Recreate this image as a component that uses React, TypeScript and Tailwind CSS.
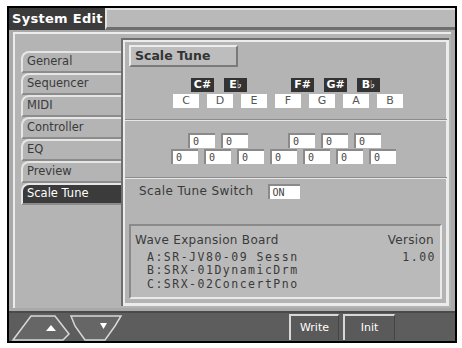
import React from "react";

const tabs = ["General", "Sequencer", "MIDI", "Controller", "EQ", "Preview", "Scale Tune"];
const blackKeys = [
  { name: "C#", ml: "ml-[18px]" },
  { name: "E♭", ml: "ml-[10px]" },
  { name: "F#", ml: "ml-[44px]" },
  { name: "G#", ml: "ml-[10px]" },
  { name: "B♭", ml: "ml-[10px]" },
];
const whiteKeys = ["C", "D", "E", "F", "G", "A", "B"];

function Field({ value, w = "w-[27px]" }: { value: string; w?: string }) {
  return (
    <div
      className={`${w} h-[15px] bg-white border-l-2 border-t-2 border-[#8a8a8a] text-[10px] leading-[13px] pl-[3px] text-[#444] font-['DejaVu_Sans_Mono',monospace]`}
    >
      {value}
    </div>
  );
}

function App() {
  return (
    <div className="w-[462px] h-[348px] bg-white pt-[6px] pl-[7px] font-['DejaVu_Sans',sans-serif]">
      <div className="w-[450px] h-[337px] border-2 border-black flex flex-col bg-[#b4b4b4]">
        {/* title */}
        <div className="flex h-[22px] shrink-0">
          <div className="w-[96px] bg-[#3b3b3b] text-white font-bold text-[13px] leading-[22px] pl-[3px] tracking-[0.3px]">
            System Edit
          </div>
          <div className="flex-1 bg-[#b9b9b9] border-t-2 border-l-2 border-[#e2e2e2] border-b-[3px] border-b-[#6e6e6e]" />
        </div>
        {/* body */}
        <div className="flex-1 flex flex-col px-[4px] pt-[2px] pb-[3px] bg-[#a9a9a9]">
          <div className="flex-1 flex border-t-2 border-l-2 border-[#ececec] bg-[#b4b4b4] pl-[6px] pt-[4px]">
            {/* tabs */}
            <div className="w-[100px] pt-[13px] flex flex-col">
              {tabs.map((t) => {
                const sel = t === "Scale Tune";
                return (
                  <div
                    key={t}
                    className={`h-[22px] rounded-tl-[8px] border-t-2 border-l-2 border-b-2 border-[#e6e6e6] border-b-[#8c8c8c] pl-[4px] text-[11.5px] leading-[17px] ${
                      sel ? "bg-[#3b3b3b] text-white" : "bg-[#b4b4b4] text-[#3a3a3a]"
                    }`}
                  >
                    {t}
                  </div>
                );
              })}
            </div>
            {/* right panel */}
            <div className="w-[328px] flex border-l-2 border-t-2 border-[#6f6f6f] mb-[2px]">
              <div className="flex-1 flex flex-col border-l-2 border-t-2 border-r-[3px] border-b-[3px] border-[#ececec] pl-[4px] pr-[3px] pt-[3px]">
                <div className="w-[109px] h-[22px] border-2 border-[#ececec] border-b-[#7a7a7a] border-r-[#7a7a7a] bg-[#bdbdbd] font-bold text-[12.5px] leading-[18px] pl-[4px] text-[#333]">
                  Scale Tune
                </div>
                {/* keys */}
                <div className="flex flex-col items-start pl-[44px] pt-[11px]">
                  <div className="flex">
                    {blackKeys.map((k) => (
                      <div
                        key={k.name}
                        className={`${k.ml} w-[23px] h-[14px] bg-[#333] text-white text-[11px] font-bold leading-[14px] text-center`}
                      >
                        {k.name}
                      </div>
                    ))}
                  </div>
                  <div className="flex gap-[8px] mt-[2px]">
                    {whiteKeys.map((k) => (
                      <div
                        key={k}
                        className="w-[26px] h-[14px] bg-white text-[#555] text-[11px] leading-[14px] text-center"
                      >
                        {k}
                      </div>
                    ))}
                  </div>
                </div>
                <div className="h-[2px] mt-[11px] bg-[#e6e6e6] border-t border-[#8c8c8c] -mx-[4px]" />
                {/* offsets */}
                <div className="flex flex-col items-start pl-[42px] pt-[12px]">
                  <div className="flex">
                    <div className="ml-[17px] flex gap-[6px]">
                      <Field value="0" />
                      <Field value="0" />
                    </div>
                    <div className="ml-[40px] flex gap-[6px]">
                      <Field value="0" />
                      <Field value="0" />
                      <Field value="0" />
                    </div>
                  </div>
                  <div className="flex gap-[6px] mt-[1px]">
                    {whiteKeys.map((k) => (
                      <Field key={k} value="0" />
                    ))}
                  </div>
                </div>
                <div className="h-[2px] mt-[13px] bg-[#e6e6e6] border-t border-[#8c8c8c] -mx-[4px]" />
                <div className="flex items-center pl-[10px] pt-[3px]">
                  <span className="text-[12px] text-[#3a3a3a] tracking-[0.4px]">Scale Tune Switch</span>
                  <div className="ml-[14px]">
                    <Field value="ON" w="w-[32px]" />
                  </div>
                </div>
                {/* wave expansion */}
                <div className="mt-[24px] mr-[1px] border-2 border-[#8a8a8a] border-b-[#eaeaea] border-r-[#eaeaea] bg-[#bababa] px-[4px] pt-[8px] pb-[6px] text-[#3a3a3a] font-['DejaVu_Sans_Mono',monospace] text-[11.5px] leading-[13.5px]">
                  <div className="flex justify-between font-['DejaVu_Sans',sans-serif] text-[12px] tracking-[0.3px] mb-[3px]">
                    <span>Wave Expansion Board</span>
                    <span className="pr-[2px]">Version</span>
                  </div>
                  <div className="flex justify-between pl-[12px] tracking-[1.5px]">
                    <span>A:SR-JV80-09 Sessn</span>
                    <span className="text-[#3a3a3a]">1.00</span>
                  </div>
                  <div className="pl-[12px] tracking-[1.5px]">B:SRX-01DynamicDrm</div>
                  <div className="pl-[12px] tracking-[1.5px]">C:SRX-02ConcertPno</div>
                </div>
              </div>
            </div>
          </div>
        </div>
        {/* bottom bar */}
        <div className="h-[30px] shrink-0 bg-[#5d5d5d] border-t-2 border-[#4a4a4a] flex items-end pl-[2px]">
          <svg width="112" height="27" viewBox="0 0 112 27">
            <polygon points="2,26 20,2 44,2 58,20 52,26" fill="#666" stroke="#d8d8d8" strokeWidth="1.5" />
            <polygon points="35,17 40,11 45,17" fill="white" />
            <polygon points="60,2 110,2 104,12 94,26 74,26 64,12" fill="#666" stroke="#d8d8d8" strokeWidth="1.5" />
            <polygon points="89,9 96,9 92.5,15" fill="white" />
          </svg>
          <div className="flex-1" />
          <div className="flex gap-[4px] mr-[60px] mb-[1px]">
            <div className="w-[50px] h-[26px] bg-[#5a5a5a] border-t-2 border-l-2 border-[#d8d8d8] border-r border-r-[#444] text-white text-[11px] leading-[24px] text-center">
              Write
            </div>
            <div className="w-[52px] h-[26px] bg-[#5a5a5a] border-t-2 border-l-2 border-[#d8d8d8] border-r border-r-[#444] text-white text-[11px] leading-[24px] text-center">
              Init
            </div>
          </div>
        </div>
      </div>
    </div>
  );
}

export default App;
